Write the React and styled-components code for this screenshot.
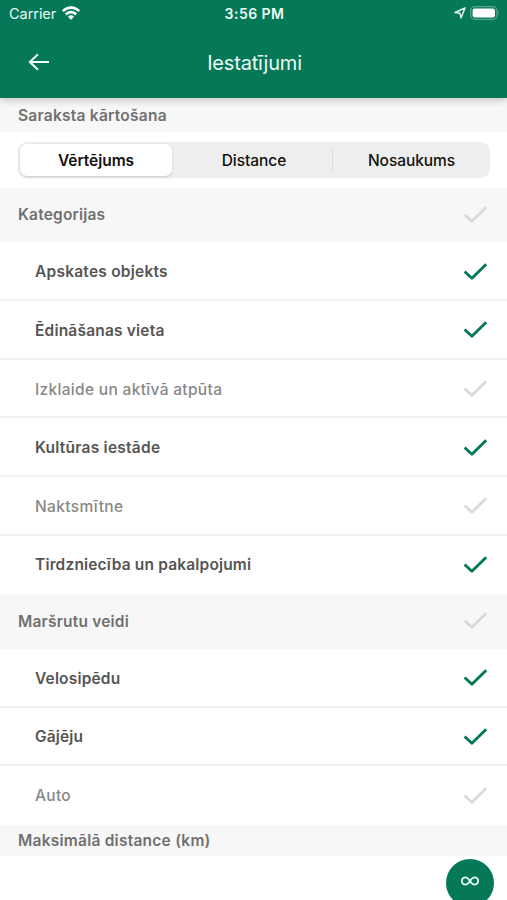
import React from 'react';
import styled, { createGlobalStyle } from 'styled-components';

const GREEN = '#047857';

const GlobalStyle = createGlobalStyle`
  *, *::before, *::after { box-sizing: border-box; }
  body {
    margin: 0;
    overflow: hidden;
    background: #fff;
    font-family: Inter, "Liberation Sans", sans-serif;
  }
`;

const Screen = styled.div`
  display: flex;
  flex-direction: column;
  width: 507px;
  height: 900px;
  overflow: hidden;
  background: #fff;
`;

const Header = styled.header`
  position: relative;
  z-index: 1;
  flex: none;
  height: 98px;
  background: ${GREEN};
  color: #ecfaf5;
  box-shadow: 0 2px 8px rgba(0, 0, 0, 0.22);
`;

const StatusBar = styled.div`
  display: grid;
  grid-template-columns: 1fr auto 1fr;
  align-items: center;
  height: 27px;
  padding: 0 7px 0 9px;
`;

const Carrier = styled.div`
  display: flex;
  align-items: center;
  gap: 6px;
  font-size: 14.5px;
  letter-spacing: -0.05px;

  svg { margin-bottom: 1px; }
`;

const Clock = styled.div`
  font-size: 14px;
  font-weight: 600;
  letter-spacing: 0.45px;
`;

const Indicators = styled.div`
  display: flex;
  align-items: center;
  justify-content: flex-end;
  gap: 4px;
  padding-bottom: 1px;
`;

const NavBar = styled.nav`
  display: grid;
  grid-template-columns: 77px 1fr 75px;
  align-items: center;
  height: 70px;
`;

const BackButton = styled.button`
  display: flex;
  justify-content: center;
  padding: 0;
  border: 0;
  background: none;
  color: inherit;
`;

const Title = styled.h1`
  margin: 0;
  padding-top: 2px;
  text-align: center;
  font-size: 20px;
  font-weight: 400;
  line-height: 24px;
  letter-spacing: -0.18px;
`;

const SectionHeader = styled.div`
  display: flex;
  flex: none;
  align-items: center;
  justify-content: space-between;
  height: ${(p) => p.$height}px;
  padding: 0 19px ${(p) => p.$lift || 0}px 18px;
  background: #f7f7f7;
  color: #707070;
  font-size: 15.5px;
  font-weight: 600;
`;

const SegmentArea = styled.div`
  flex: none;
  height: 56px;
  padding: 10px 17px 10px 18px;
`;

const Segmented = styled.div`
  display: grid;
  grid-template-columns: 154px 161px 1fr;
  align-items: center;
  height: 36px;
  border-radius: 9px;
  background: #eeeeee;
`;

const Segment = styled.button`
  height: ${(p) => (p.$active ? 32 : 22)}px;
  margin-left: ${(p) => (p.$active ? 2 : 0)}px;
  padding: 2px 0 0 ${(p) => (p.$divided ? 4 : 0)}px;
  border: 0;
  border-right: ${(p) => (p.$divided ? '1px solid #dcdcdc' : '0')};
  border-radius: ${(p) => (p.$active ? 7 : 0)}px;
  background: ${(p) => (p.$active ? '#fff' : 'transparent')};
  box-shadow: ${(p) => (p.$active ? '0 1px 3px rgba(0, 0, 0, 0.16)' : 'none')};
  color: #111;
  font: ${(p) => (p.$active ? 600 : 500)} 15.5px/20px Inter, sans-serif;
  letter-spacing: -0.05px;
`;

const Row = styled.div`
  display: flex;
  align-items: center;
  justify-content: space-between;
  height: 58.6px;
  padding: 2px 19px 0 35px;
  border-bottom: 2px solid ${(p) => (p.$last ? 'transparent' : '#f2f2f2')};
  color: ${(p) => (p.$on ? '#555555' : '#888888')};
  font-size: 15.5px;
  font-weight: ${(p) => (p.$on ? 600 : 500)};
`;

const List = styled.div`
  flex: none;
  height: ${(p) => p.$height}px;
  padding-top: 0.6px;
`;

const Label = styled.span`
  white-space: nowrap;
  letter-spacing: ${(p) => p.$spacing || 0}px;
`;

const DistanceArea = styled.div`
  display: flex;
  flex: 1;
  justify-content: flex-end;
  padding: 3px 13px 0 0;
  overflow: hidden;
`;

const DistanceKnob = styled.div`
  display: flex;
  flex: none;
  align-items: center;
  justify-content: center;
  width: 48px;
  height: 48px;
  padding-bottom: 4px;
  border-radius: 50%;
  background: ${GREEN};
`;

const Check = ({ on }) => (
  <svg width="25" height="18" viewBox="0 0 25 18" fill="none">
    <path
      d="M1.6 8.5 8.9 15.3 23.2 1.3"
      stroke={on ? GREEN : '#dadada'}
      strokeWidth="2.9"
      strokeLinejoin="round"
    />
  </svg>
);

const WifiIcon = () => (
  <svg width="18" height="14" viewBox="0 0 18 14">
    <path d="M0 4.3C5-1.1 13-1.1 18 4.3L16.3 6.1C12.3 2 5.7 2 1.7 6.1Z" fill="#fff" />
    <path d="M3 7.5C6.3 3.9 11.7 3.9 15 7.5L13.2 9.4C10.8 6.8 7.2 6.8 4.8 9.4Z" fill="#fff" />
    <path d="M6 10.7C7.7 8.9 10.3 8.9 12 10.7L9.6 13.2Q9 13.8 8.4 13.2Z" fill="#fff" />
  </svg>
);

const LocationIcon = () => (
  <svg width="12" height="12" viewBox="0 0 12 12" fill="none">
    <path d="M11 1 1 5.5 6 6.2 7 11Z" stroke="#e5f7f0" strokeWidth="1.4" strokeLinejoin="round" />
  </svg>
);

const BatteryIcon = () => (
  <svg width="30" height="14" viewBox="0 0 30 14">
    <rect x="0.7" y="0.7" width="26.3" height="12.6" rx="4" fill="none" stroke="#5aa58c" strokeWidth="1.3" />
    <rect x="2.6" y="2.5" width="22.4" height="9" rx="2.2" fill="#fff" />
    <path d="M28.3 4.8q1.5 2.2 0 4.4z" fill="#6eae98" />
  </svg>
);

const BackIcon = () => (
  <svg width="22" height="18" viewBox="0 0 22 18" fill="none">
    <path d="M10 1.2 1.8 9 10 16.8M2 9H21" stroke="#f0fdf8" strokeWidth="2" />
  </svg>
);

const InfinityIcon = () => (
  <svg width="18" height="10" viewBox="0 0 18 10" fill="none">
    <path
      d="M9 5C7.4 2.5 6.2 1.3 4.5 1.3A3.7 3.7 0 0 0 4.5 8.7C6.2 8.7 7.4 7.5 9 5S11.8 1.3 13.5 1.3A3.7 3.7 0 0 1 13.5 8.7C11.8 8.7 10.6 7.5 9 5Z"
      stroke="#e3f8ef"
      strokeWidth="1.8"
    />
  </svg>
);

const categories = [
  { name: 'Apskates objekts', on: true, spacing: 0.23 },
  { name: 'Ēdināšanas vieta', on: true, spacing: 0.19 },
  { name: 'Izklaide un aktīvā atpūta', on: false, spacing: 0.32 },
  { name: 'Kultūras iestāde', on: true, spacing: 0.24 },
  { name: 'Naktsmītne', on: false, spacing: 0.37 },
  { name: 'Tirdzniecība un pakalpojumi', on: true, spacing: 0.17 },
];

const routes = [
  { name: 'Velosipēdu', on: true, spacing: 0.17 },
  { name: 'Gājēju', on: true, spacing: 0.15 },
  { name: 'Auto', on: false, spacing: 0.3 },
];

const Options = ({ items, height }) => (
  <List $height={height}>
    {items.map((item, i) => (
      <Row key={item.name} $on={item.on} $last={i === items.length - 1}>
        <Label $spacing={item.spacing}>{item.name}</Label>
        <Check on={item.on} />
      </Row>
    ))}
  </List>
);

export default function App() {
  return (
    <>
      <GlobalStyle />
      <Screen>
        <Header>
          <StatusBar>
            <Carrier>
              Carrier
              <WifiIcon />
            </Carrier>
            <Clock>3:56 PM</Clock>
            <Indicators>
              <LocationIcon />
              <BatteryIcon />
            </Indicators>
          </StatusBar>
          <NavBar>
            <BackButton aria-label="Atpakaļ">
              <BackIcon />
            </BackButton>
            <Title>Iestatījumi</Title>
          </NavBar>
        </Header>
        <SectionHeader $height={34}>
          <Label $spacing={0.25}>Saraksta kārtošana</Label>
        </SectionHeader>
        <SegmentArea>
          <Segmented>
            <Segment $active>Vērtējums</Segment>
            <Segment $divided>Distance</Segment>
            <Segment>Nosaukums</Segment>
          </Segmented>
        </SegmentArea>
        <SectionHeader $height={54} $lift={1}>
          <Label $spacing={0.18}>Kategorijas</Label>
          <Check />
        </SectionHeader>
        <Options items={categories} height={352} />
        <SectionHeader $height={54.5}>
          <Label $spacing={0.2}>Maršrutu veidi</Label>
          <Check />
        </SectionHeader>
        <Options items={routes} height={176} />
        <SectionHeader $height={31.5}>
          <Label $spacing={0.24}>Maksimālā distance (km)</Label>
        </SectionHeader>
        <DistanceArea>
          <DistanceKnob>
            <InfinityIcon />
          </DistanceKnob>
        </DistanceArea>
      </Screen>
    </>
  );
}
